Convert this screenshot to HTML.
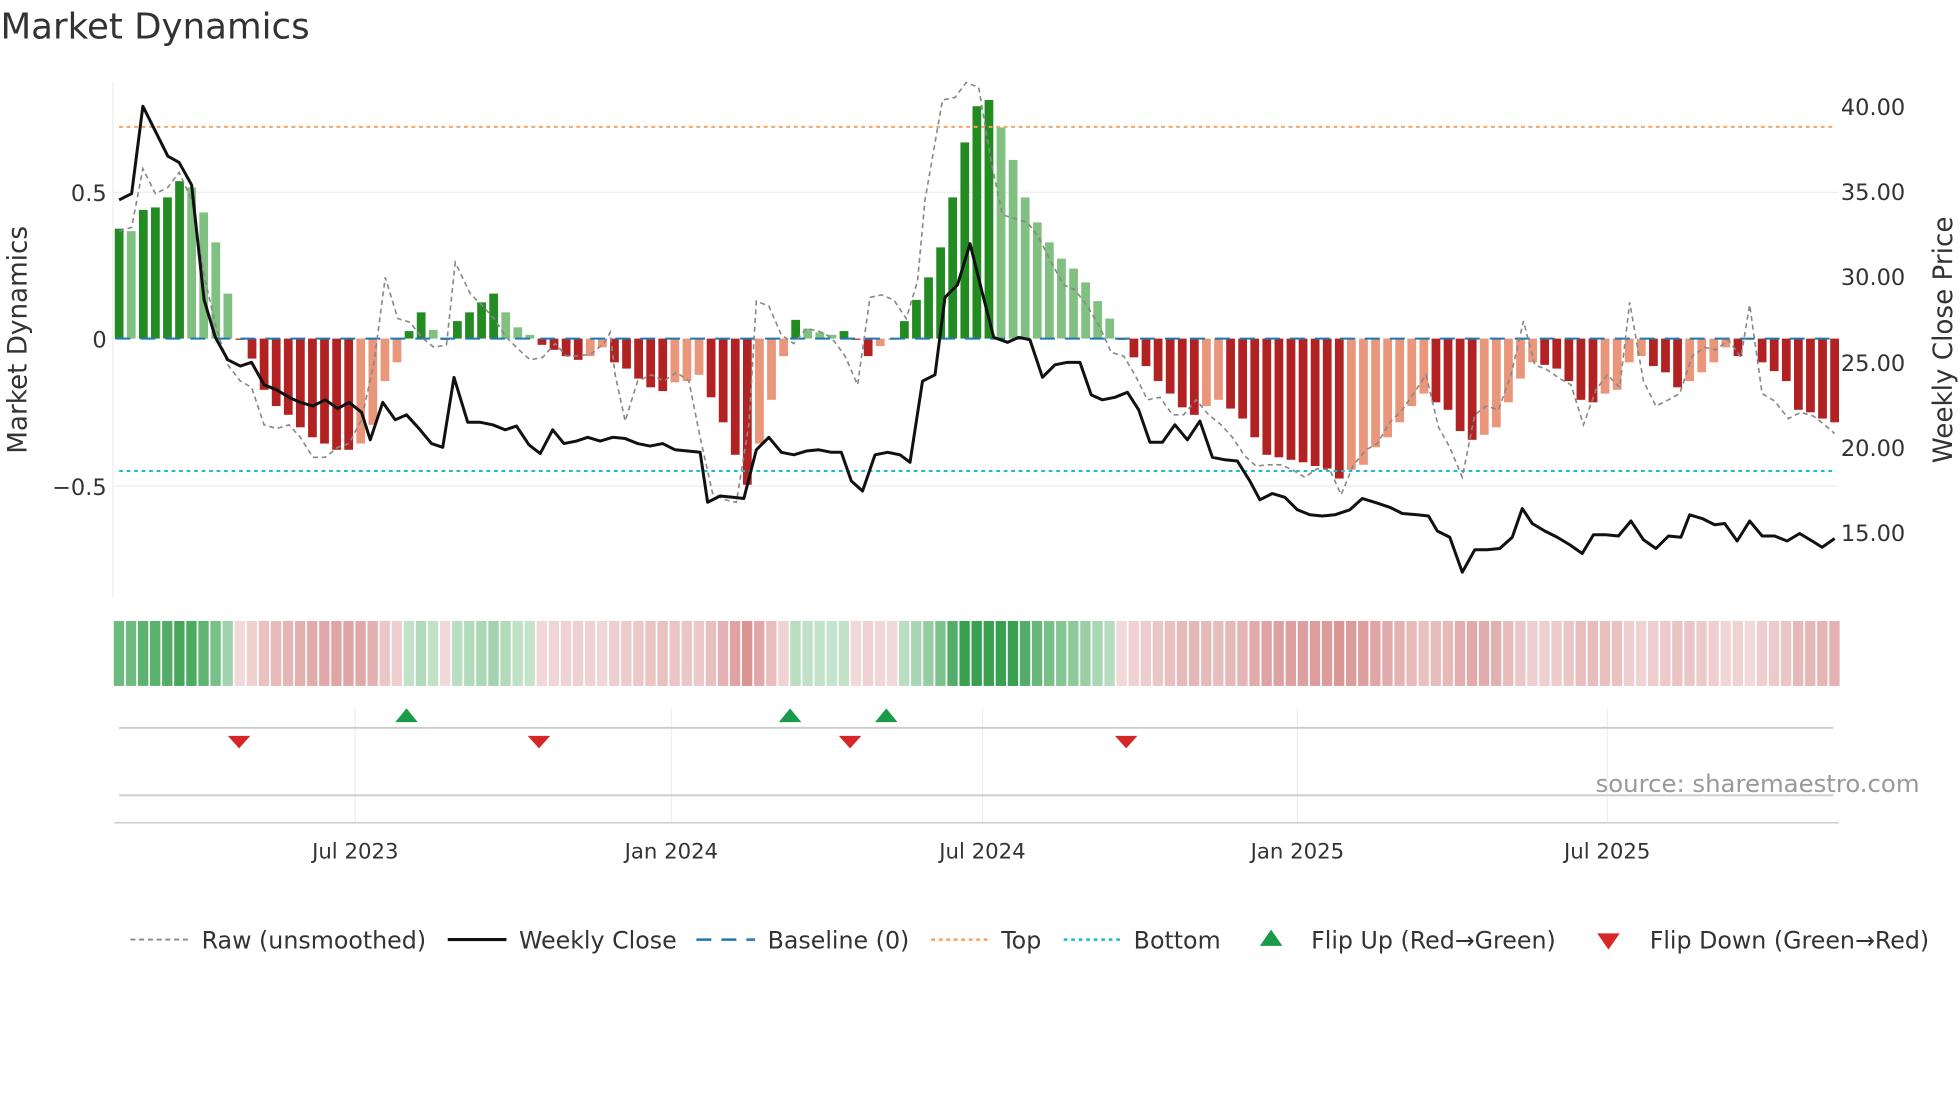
<!DOCTYPE html>
<html><head><meta charset="utf-8"><style>
html,body{margin:0;padding:0;background:#fff;}
svg{display:block;font-family:"DejaVu Sans","Liberation Sans",sans-serif;}
</style></head><body>
<svg id="s" width="1960" height="1102" viewBox="0 0 1568 882" xmlns="http://www.w3.org/2000/svg">
<rect width="1568" height="882" fill="#fff"/>
<text x="0" y="31" font-size="28.5" fill="#333">Market Dynamics</text>
<line x1="90" y1="65" x2="90" y2="478" stroke="#eee"/>
<line x1="90" y1="154" x2="1471" y2="154" stroke="#eee"/>
<line x1="90" y1="389" x2="1471" y2="389" stroke="#eee"/>
<g id="bars"></g>
<line x1="92" y1="271" x2="1471" y2="271" stroke="#1f77b4" stroke-width="1.6" stroke-dasharray="12,8"/>
<line x1="95" y1="101.5" x2="1466" y2="101.5" stroke="#f4a460" stroke-width="1.6" stroke-dasharray="3,3"/>
<line x1="95" y1="377" x2="1466" y2="377" stroke="#17becf" stroke-width="1.6" stroke-dasharray="3,3"/>
<polyline id="raw" fill="none" stroke="#888" stroke-width="1.3" stroke-dasharray="4,3"/>
<polyline id="close" fill="none" stroke="#111" stroke-width="2.4" stroke-linejoin="round"/>
<g font-size="18" fill="#333">
<text x="85" y="161" text-anchor="end">0.5</text>
<text x="85" y="278" text-anchor="end">0</text>
<text x="85" y="396" text-anchor="end">−0.5</text>
<text x="1473" y="92">40.00</text><text x="1473" y="160">35.00</text><text x="1473" y="228">30.00</text>
<text x="1473" y="297">25.00</text><text x="1473" y="365">20.00</text><text x="1473" y="433">15.00</text>
<text transform="translate(21,272) rotate(-90)" text-anchor="middle" font-size="21">Market Dynamics</text>
<text transform="translate(1562,272) rotate(-90)" text-anchor="middle" font-size="21">Weekly Close Price</text>
</g>
<g id="heat"></g>
<g stroke="#eee">
<line x1="284" y1="567" x2="284" y2="658"/><line x1="537" y1="567" x2="537" y2="658"/><line x1="786" y1="567" x2="786" y2="658"/><line x1="1038" y1="567" x2="1038" y2="658"/><line x1="1286" y1="567" x2="1286" y2="658"/>
</g>
<line x1="95" y1="582.5" x2="1467" y2="582.5" stroke="#ccc" stroke-width="1.5"/>
<line x1="95" y1="636.5" x2="1467" y2="636.5" stroke="#ccc" stroke-width="1.5"/>
<line x1="91" y1="658.5" x2="1471" y2="658.5" stroke="#ccc" stroke-width="1.2"/>
<g fill="#1a9a4a"><polygon points="316,578 334,578 325,567"/><polygon points="623,578 641,578 632,567"/><polygon points="700,578 718,578 709,567"/></g>
<g fill="#d62728"><polygon points="182,589 200,589 191,599"/><polygon points="422,589 440,589 431,599"/><polygon points="671,589 689,589 680,599"/><polygon points="892,589 910,589 901,599"/></g>
<text x="1536" y="634" text-anchor="end" font-size="19.5" fill="#999">source: sharemaestro.com</text>
<g font-size="17" fill="#333" text-anchor="middle">
<text x="284" y="687">Jul 2023</text><text x="537" y="687">Jan 2024</text><text x="786" y="687">Jul 2024</text><text x="1038" y="687">Jan 2025</text><text x="1286" y="687">Jul 2025</text>
</g>
<g font-size="19" fill="#333">
<line x1="104" y1="752" x2="150" y2="752" stroke="#888" stroke-width="1.5" stroke-dasharray="4,3"/><text x="161" y="759">Raw (unsmoothed)</text>
<line x1="358" y1="752" x2="405" y2="752" stroke="#111" stroke-width="2.5"/><text x="415" y="759">Weekly Close</text>
<line x1="557" y1="752" x2="604" y2="752" stroke="#1f77b4" stroke-width="2" stroke-dasharray="12,8"/><text x="614" y="759">Baseline (0)</text>
<line x1="745" y1="752" x2="791" y2="752" stroke="#f4a460" stroke-width="2" stroke-dasharray="3,3"/><text x="801" y="759">Top</text>
<line x1="851" y1="752" x2="897" y2="752" stroke="#17becf" stroke-width="2" stroke-dasharray="3,3"/><text x="907" y="759">Bottom</text>
<polygon points="1008,757 1026,757 1017,744" fill="#1a9a4a"/><text x="1049" y="759">Flip Up (Red→Green)</text>
<polygon points="1278,747 1296,747 1287,760" fill="#d62728"/><text x="1320" y="759">Flip Down (Green→Red)</text>
</g>
</svg>
<script>
var tops=[183,185,168,166,158,145,150,170,194,235,271,287,312,325,332,342,350,355,360,360,355,340,305,290,265,250,264,271,257,250,242,235,250,262,268,276,280,285,288,285,278,290,295,303,310,313,306,305,300,318,338,364,388,355,320,285,256,263,266,268,265,271,285,277,271,257,240,222,198,158,114,85,80,102,128,158,178,194,207,215,226,241,255,271,286,293,305,315,326,332,325,320,327,335,350,364,366,368,370,373,375,383,376,372,358,350,338,325,315,322,328,345,352,348,342,322,303,290,292,295,305,320,322,315,312,290,285,293,298,310,305,298,290,278,285,271,290,297,305,328,330,335,338];
var ns="http://www.w3.org/2000/svg",B=document.getElementById('bars'),H=document.getElementById('heat');
function el(p,a){var e=document.createElementNS(ns,'rect');for(var k in a)e.setAttribute(k,a[k]);p.appendChild(e);}
var n=tops.length,step=(1468-95)/(n-1);
for(var i=0;i<n;i++){var x=95+step*i,t=tops[i],up=t<271;
 var prev=i>0?tops[i-1]:t,strong=up?(t<=prev):(t>=prev);
 var c=up?(strong?'#228b22':'#80c080'):(strong?'#b22222':'#e9967a');
 var y=Math.min(t,271),h=Math.abs(t-271);if(h<1)h=1;
 el(B,{x:x-3.5,y:y,width:7,height:h,fill:c});
 var m=Math.min(1,h/140),hc=up?'rgba(34,150,60,'+(0.25+0.65*m)+')':'rgba(190,70,70,'+(0.2+0.45*m)+')';
 el(H,{x:x-4.3,y:497,width:8.3,height:52,fill:hc});}
var cl="95,160 105,155 114,85 124,105 134,125 143,130 153,148 163,240 172,270 182,288 192,293 201,290 211,308 221,312 231,318 240,322 250,325 260,320 270,327 279,322 289,330 296,352 306,322 316,336 325,332 335,343 345,355 354,358 363,302 374,338 384,338 394,340 404,344 413,341 423,356 432,363 442,344 451,355 461,353 470,350 480,353 490,350 500,351 510,355 520,357 530,355 540,360 550,361 560,362 566,402 576,397 586,398 595,399 605,360 615,350 625,362 635,364 645,361 655,360 665,362 673,362 681,385 690,393 700,364 710,362 720,364 728,370 738,305 748,300 756,238 766,228 776,195 786,235 795,270 806,274 815,270 824,272 834,302 844,292 854,290 864,290 873,316 882,320 892,318 902,314 911,328 920,354 930,354 940,340 950,352 960,337 970,366 980,368 990,369 1000,385 1008,400 1018,395 1028,398 1038,408 1048,412 1058,413 1068,412 1080,408 1090,399 1100,402 1112,406 1122,411 1134,412 1143,413 1150,425 1160,430 1170,458 1180,440 1190,440 1200,439 1210,430 1218,407 1226,419 1236,425 1246,430 1256,436 1266,443 1275,428 1285,428 1295,429 1305,417 1315,432 1325,439 1335,429 1345,430 1352,412 1362,415 1372,420 1380,419 1390,433 1400,417 1410,429 1420,429 1430,433 1440,427 1450,433 1458,438 1468,431";
var rw="95,185 105,182 114,135 124,155 134,150 143,138 153,160 163,220 172,260 182,292 192,305 201,310 211,340 221,343 231,340 240,350 250,366 260,366 270,358 279,355 289,336 299,290 308,222 318,255 328,258 337,270 347,278 357,276 364,210 376,235 386,245 395,255 405,270 415,280 424,288 434,286 444,275 453,285 463,285 473,283 483,275 488,266 492,300 500,337 510,305 521,300 531,305 541,298 551,305 560,350 570,395 580,400 589,402 599,340 605,241 615,245 625,268 635,275 645,263 655,265 665,270 676,285 686,308 696,238 705,236 715,240 725,255 734,225 740,160 754,80 764,78 773,66 783,70 793,130 802,172 812,175 822,178 831,190 841,210 851,228 860,232 870,245 880,262 889,282 899,285 908,300 918,320 928,318 938,332 947,332 957,320 967,332 977,340 986,350 996,365 1005,373 1015,372 1025,372 1034,376 1044,382 1054,375 1064,376 1073,396 1083,372 1093,360 1102,355 1112,338 1122,328 1131,315 1141,300 1151,342 1160,358 1170,382 1180,332 1189,325 1199,328 1209,300 1219,257 1228,292 1238,296 1248,303 1257,308 1267,340 1277,312 1286,300 1296,310 1304,242 1315,305 1325,325 1335,320 1344,315 1354,285 1364,278 1373,280 1383,272 1393,286 1400,244 1410,315 1420,321 1431,335 1441,330 1451,333 1460,340 1468,347";
document.getElementById('close').setAttribute('points',cl);
document.getElementById('raw').setAttribute('points',rw);
</script>
</body></html>
